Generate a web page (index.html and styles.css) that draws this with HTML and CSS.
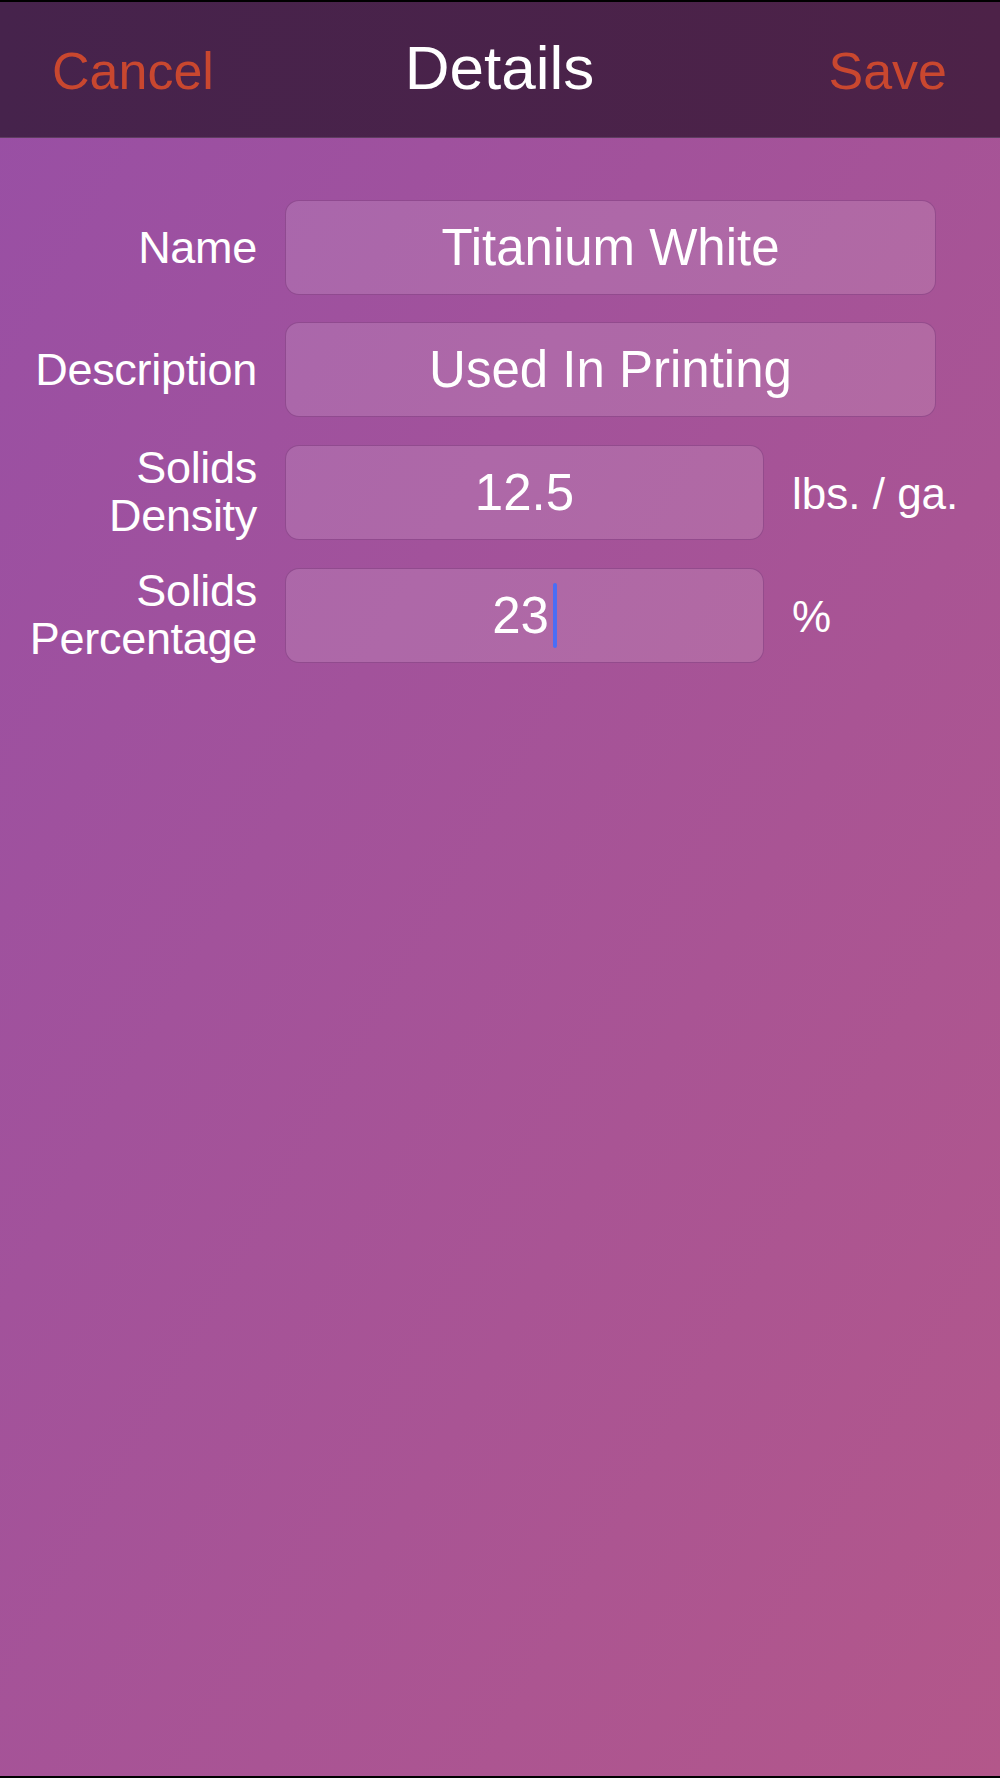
FILE: index.html
```html
<!DOCTYPE html>
<html lang="en">
<head>
    <meta charset="UTF-8">
    <meta name="viewport" content="width=device-width, initial-scale=1.0">
    <title>Details</title>
    <link rel="stylesheet" href="styles.css">
</head>
<body>
    <div class="screen">
        <div class="navbar">
            <a href="#" class="nav-btn">Cancel</a>
            <h1 class="nav-title">Details</h1>
            <a href="#" class="nav-btn right">Save</a>
        </div>

        <div class="form">
            <label class="label">Name</label>
            <div class="field wide">Titanium White</div>

            <label class="label">Description</label>
            <div class="field wide">Used In Printing</div>

            <label class="label">Solids<br>Density</label>
            <div class="field">12.5</div>
            <span class="unit">lbs. / ga.</span>

            <label class="label">Solids<br>Percentage</label>
            <div class="field">23<span class="cursor"></span></div>
            <span class="unit">%</span>
        </div>
    </div>
</body>
</html>
```

FILE: styles.css
```css
body {
    margin: 0;
    background: #000;
    font-family: 'Liberation Sans', Arial, sans-serif;
    color: white;
}
.screen {
    margin: 2px 0;
    height: 1774px;
    background: linear-gradient(to bottom right, #984fa5, #b3578a);
    overflow: hidden;
}
.navbar {
    display: grid;
    grid-template-columns: 1fr auto 1fr;
    align-items: baseline;
    height: 136px;
    box-sizing: border-box;
    padding: 35px 53px 0 52px;
    background: linear-gradient(to right, #46234c, #4d2248);
    border-bottom: 1px solid #5e3d60;
}
.nav-btn {
    font-size: 52px;
    line-height: 1;
    color: #c9472f;
    text-decoration: none;
}
.nav-btn.right {
    justify-self: end;
}
.nav-title {
    margin: 0;
    font-size: 62px;
    font-weight: normal;
    line-height: 1;
}
.form {
    display: grid;
    grid-template-columns: 257px 479px 144px;
    column-gap: 28px;
    row-gap: 27px;
    align-items: center;
    padding-top: 62px;
}
.label {
    font-size: 45px;
    line-height: 48px;
    text-align: right;
    letter-spacing: -0.3px;
}
.field {
    display: flex;
    align-items: center;
    justify-content: center;
    height: 95px;
    box-sizing: border-box;
    background: rgba(255, 255, 255, 0.13);
    border: 1px solid rgba(110, 40, 110, 0.45);
    border-radius: 14px;
    font-size: 51px;
    line-height: 1;
}
.field.wide {
    grid-column: span 2;
}
.unit {
    font-size: 44px;
    white-space: nowrap;
    padding-top: 4px;
}
.cursor {
    display: inline-block;
    width: 4px;
    height: 65px;
    margin-left: 4px;
    background: #4a6ef6;
    border-radius: 2px;
}
```
